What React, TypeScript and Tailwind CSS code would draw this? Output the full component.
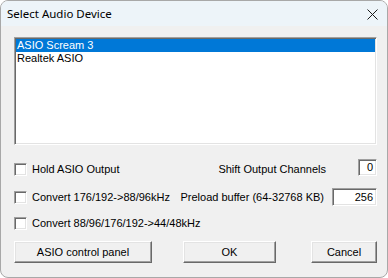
export default function App() {
  const sunken =
    'border border-t-[#a0a0a0] border-l-[#a0a0a0] border-b-white border-r-white shadow-[inset_1px_1px_0_#696969,inset_-1px_-1px_0_#e3e3e3]';
  const raised =
    'border border-t-white border-l-white border-b-[#696969] border-r-[#696969] shadow-[inset_-1px_-1px_0_#a0a0a0,inset_1px_1px_0_#e3e3e3] bg-[#f0f0f0]';

  return (
    <div className="w-[388px] h-[278px] bg-[#f0f0f0] border border-[#a8a8a8] rounded-lg overflow-hidden flex flex-col text-black font-['Liberation_Sans',Tahoma,sans-serif] text-[11px] leading-none">
      {/* Title bar */}
      <div className="h-[25px] bg-[#edf4f9] flex items-center justify-between pl-[6px] pr-[9px] shrink-0">
        <span className="font-['Noto_Sans',sans-serif] text-[11.5px] text-black">Select Audio Device</span>
        <svg width="11" height="11" viewBox="0 0 11 11" className="mt-[1px]">
          <path d="M0.5 0.5 L10.5 10.5 M10.5 0.5 L0.5 10.5" stroke="#1a1a1a" strokeWidth="1" fill="none" />
        </svg>
      </div>

      <div className="flex flex-col pl-[13px] pr-[10px]">
        {/* Device list */}
        <div className={`mt-[11px] h-[108px] bg-white ${sunken} p-[1px]`}>
          <div className="h-[13px] bg-[#0078d7] text-white flex items-center pl-[1px]">ASIO Scream 3</div>
          <div className="h-[13px] flex items-center pl-[1px]">Realtek ASIO</div>
        </div>

        {/* Row 1 */}
        <div className="mt-[13px] h-[22px] flex items-center">
          <div className={`w-[13px] h-[13px] bg-white ${sunken}`} />
          <span className="ml-[5px]">Hold ASIO Output</span>
          <span className="ml-auto">Shift Output Channels</span>
          <div className={`ml-[32px] self-start mt-[1px] w-[19px] h-[17px] bg-white ${sunken} flex items-center justify-end pr-[3px]`}>
            0
          </div>
        </div>

        {/* Row 2 */}
        <div className="mt-[6px] h-[22px] flex items-center">
          <div className={`w-[13px] h-[13px] bg-white ${sunken}`} />
          <span className="ml-[5px]">Convert 176/192-&gt;88/96kHz</span>
          <span className="ml-auto">Preload buffer (64-32768 KB)</span>
          <div className={`ml-[8px] w-[45px] h-[18px] bg-white ${sunken} flex items-center justify-end pr-[3px]`}>
            256
          </div>
        </div>

        {/* Row 3 */}
        <div className="mt-[4px] h-[22px] flex items-center">
          <div className={`w-[13px] h-[13px] bg-white ${sunken}`} />
          <span className="ml-[5px]">Convert 88/96/176/192-&gt;44/48kHz</span>
        </div>

        {/* Buttons */}
        <div className="mt-[7px] flex">
          <button className={`w-[138px] h-[22px] ${raised} flex items-center justify-center`}>ASIO control panel</button>
          <button className={`ml-[31px] w-[93px] h-[22px] ${raised} flex items-center justify-center`}>OK</button>
          <button className={`ml-[35px] w-[66px] h-[22px] ${raised} flex items-center justify-center`}>Cancel</button>
        </div>
      </div>
    </div>
  );
}
